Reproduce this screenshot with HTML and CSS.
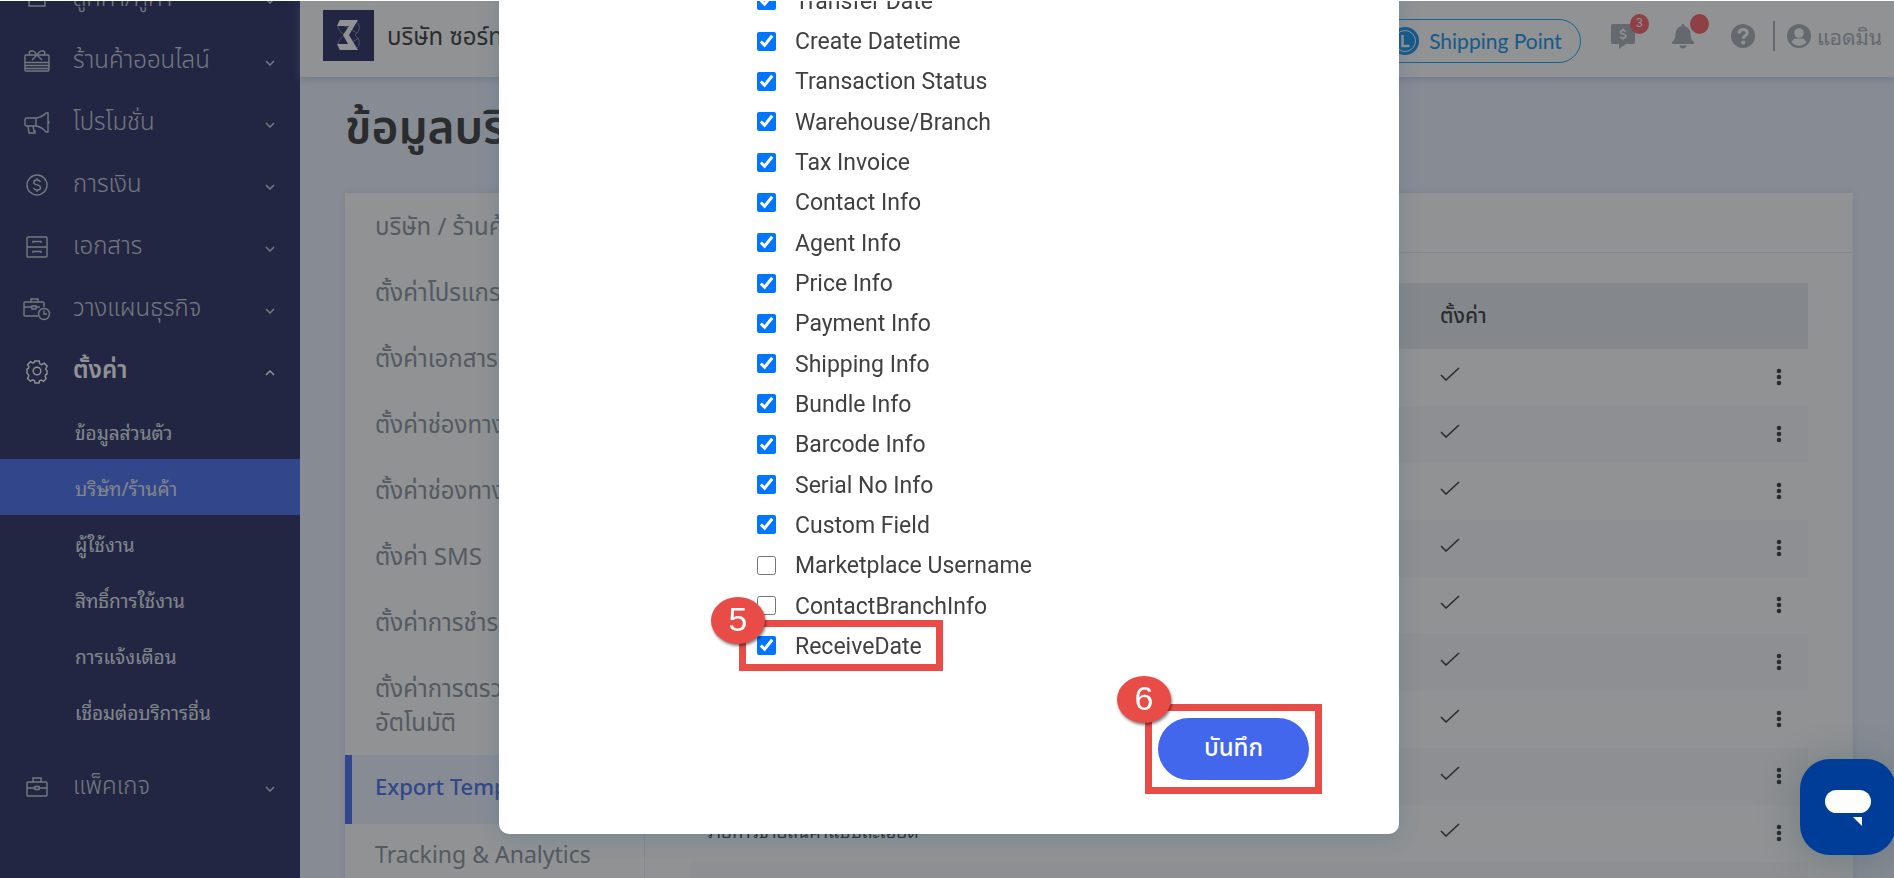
FILE: index.html
```html
<!DOCTYPE html>
<html lang="th">
<head>
    <meta charset="UTF-8">
    <meta name="viewport" content="width=device-width, initial-scale=1.0">
    <title>ข้อมูลบริษัท</title>
    <link rel="stylesheet" href="styles.css">
</head>
<body>
    <div class="layout">
        <nav class="sidebar">
            <a href="#" class="menu-item">
                <svg class="icon" viewBox="0 0 28 28"><circle cx="14" cy="8" r="5"/><path d="M6 21v-3q0-4 4-4h8q4 0 4 4v3zM2 15l3-2M26 15l-3-2"/></svg>
                <span>ลูกค้า/คู่ค้า</span>
                <svg class="arrow" viewBox="0 0 10 6"><path d="M1 1l4 4 4-4"/></svg>
            </a>
            <a href="#" class="menu-item">
                <svg class="icon" viewBox="0 0 28 28"><rect x="2" y="8" width="24" height="16" rx="1"/><path d="M2 15.500h24M2 18.500h24M2 21.500h24M14 8q-3-5-6-4-3 1-1 4M14 8q3-5 6-4 3 1 1 4M14 8l-5 5M14 8l5 5"/></svg>
                <span>ร้านค้าออนไลน์</span>
                <svg class="arrow" viewBox="0 0 10 6"><path d="M1 1l4 4 4-4"/></svg>
            </a>
            <a href="#" class="menu-item">
                <svg class="icon" viewBox="0 0 28 28"><path d="M13 9H4q-2 0-2 2v4q0 2 2 2h9zM13 9q6-1 10-5h2v19h-2q-4-5-10-6M25 12q2 1 0 3M5 17l1 7h6v-2h-1l-1-5"/></svg>
                <span>โปรโมชั่น</span>
                <svg class="arrow" viewBox="0 0 10 6"><path d="M1 1l4 4 4-4"/></svg>
            </a>
            <a href="#" class="menu-item">
                <svg class="icon" viewBox="0 0 28 28"><circle cx="14" cy="14" r="10"/><path d="M17.500 11q-1-2-3.500-2-3.300 0-3.300 2.300 0 2 3.300 2.600 3.500.6 3.500 2.800 0 2.300-3.500 2.300-2.700 0-3.500-2M14 7v2M14 19v2"/></svg>
                <span>การเงิน</span>
                <svg class="arrow" viewBox="0 0 10 6"><path d="M1 1l4 4 4-4"/></svg>
            </a>
            <a href="#" class="menu-item">
                <svg class="icon" viewBox="0 0 28 28"><rect x="4" y="4" width="20" height="20" rx="1"/><path d="M4 14h20M10 10V8.500h8V10M10 20v-1.500h8V20"/></svg>
                <span>เอกสาร</span>
                <svg class="arrow" viewBox="0 0 10 6"><path d="M1 1l4 4 4-4"/></svg>
            </a>
            <a href="#" class="menu-item">
                <svg class="icon" viewBox="0 0 28 28"><path d="M15 21H2q-1 0-1-1V8q0-1 1-1h18q1 0 1 1v4M8 7V4h7v3M1 12h8M13 12h4M9 11v3h4v-3z"/><circle cx="21" cy="19" r="5.500"/><path d="M21 15.500V19h3"/></svg>
                <span>วางแผนธุรกิจ</span>
                <svg class="arrow" viewBox="0 0 10 6"><path d="M1 1l4 4 4-4"/></svg>
            </a>
            <a href="#" class="menu-item open">
                <svg class="icon" viewBox="0 0 28 28"><circle cx="14" cy="14" r="3.800"/><path d="M11.800 4h4.400l.6 2.800 2 .9 2.500-1.500 2.900 3-1.500 2.500.6 1.300.7.500v3.600l-1.300.7-.7 1.600 1.200 2-2.600 3-2.300-1.400-1.800.8-.5 2.200h-4l-.5-2.300-1.900-.9-2.300 1.400-2.800-2.900 1.400-2.300-.7-1.700L4 16.200v-4.100l1.400-.7.6-1.500-1.400-2.300 3-2.900L9.700 6l1.500-.6z"/></svg>
                <span>ตั้งค่า</span>
                <svg class="arrow" viewBox="0 0 10 6"><path d="M1 5l4-4 4 4"/></svg>
            </a>
            <div class="submenu">
                <a href="#">ข้อมูลส่วนตัว</a>
                <a href="#" class="active">บริษัท/ร้านค้า</a>
                <a href="#">ผู้ใช้งาน</a>
                <a href="#">สิทธิ์การใช้งาน</a>
                <a href="#">การแจ้งเตือน</a>
                <a href="#">เชื่อมต่อบริการอื่น</a>
            </div>
            <a href="#" class="menu-item">
                <svg class="icon" viewBox="0 0 28 28"><rect x="4" y="9" width="20" height="14" rx="1"/><path d="M10 9V5h8v4M4 15h8M16 15h8M12 13.500h4v3h-4z"/></svg>
                <span>แพ็คเกจ</span>
                <svg class="arrow" viewBox="0 0 10 6"><path d="M1 1l4 4 4-4"/></svg>
            </a>
        </nav>

        <div class="page">
            <header class="topbar">
                <svg class="logo" viewBox="0 0 51 51"><path d="M0 0h51v51H0z" fill="#23275d"/><path d="M17 10q-6 9 5 15-11 7-5 15M32 10q9 8 0 15 9 8 0 15M20 15l14 8M36 28l-15 9" fill="none" stroke="#777ca8"/><path d="M17 10h18l-9 15 9 15H17l-3-6h11l-5-9 6-9H14z" fill="#fff"/></svg>
                <span class="company">บริษัท ซอร์ทเอาท์ จำกัด</span>
                <div class="tools">
                    <a href="#" class="pill">
                        <svg viewBox="0 0 28 28"><circle cx="14" cy="14" r="14" fill="#0a8ee6"/><circle cx="14" cy="14" r="10.500" fill="none" stroke="#fff"/><path d="M11.500 8v11h7" fill="none" stroke="#fff" stroke-width="2.500"/></svg>
                        Shipping Point
                    </a>
                    <button type="button" class="tool" aria-label="ยอดเงิน">
                        <svg viewBox="0 0 26 26"><path d="M3 1h20q2 0 2 2v16q0 2-2 2h-7l-7 5v-5H3q-2 0-2-2V3q0-2 2-2z"/><path d="M15.500 8.500q-1-1.300-2.500-1.300-2.500 0-2.500 1.800 0 1.500 2.500 2 2.800.6 2.800 2.200 0 1.900-2.800 1.900-1.800 0-2.800-1.500M13 5.500v1.700M13 15v1.800" fill="none" stroke="#fff" stroke-width="1.600"/></svg>
                        <span class="count">3</span>
                    </button>
                    <button type="button" class="tool" aria-label="แจ้งเตือน">
                        <svg viewBox="0 0 26 26"><path d="M13 1q1.700 0 1.700 2.200 5.800 1.300 5.800 8 0 5.300 3.500 7.800v2H2v-2q3.500-2.500 3.500-7.800 0-6.700 5.800-8Q11.300 1 13 1zM9.500 22.500h7q-.5 3-3.500 3t-3.500-3z"/></svg>
                        <span class="count"></span>
                    </button>
                    <button type="button" class="tool" aria-label="ช่วยเหลือ">
                        <svg viewBox="0 0 26 26"><circle cx="13" cy="13" r="12"/><path d="M9 10.500q.5-4 4.200-4 4 0 4 3.400 0 1.800-2.200 3-1.800 1-1.800 2.800" fill="none" stroke="#fff" stroke-width="3"/><circle cx="13.200" cy="19.500" r="2" fill="#fff"/></svg>
                    </button>
                    <a href="#" class="user">
                        <svg viewBox="0 0 26 26"><circle cx="13" cy="13" r="12"/><circle cx="13" cy="10" r="4.800" fill="#fff"/><path d="M5.500 19q2-3.800 5-3.500h5q3-.3 5 3.500-3 3.800-7.500 3.800T5.500 19z" fill="#fff"/></svg>
                        แอดมิน
                    </a>
                </div>
            </header>

            <main>
                <h1>ข้อมูลบริษัท</h1>
                <div class="card">
                    <nav class="tabs">
                        <a href="#">บริษัท / ร้านค้า</a>
                        <a href="#">ตั้งค่าโปรแกรม</a>
                        <a href="#">ตั้งค่าเอกสาร</a>
                        <a href="#">ตั้งค่าช่องทางขาย</a>
                        <a href="#">ตั้งค่าช่องทางส่ง</a>
                        <a href="#">ตั้งค่า SMS</a>
                        <a href="#">ตั้งค่าการชำระเงิน</a>
                        <a href="#">ตั้งค่าการตรวจสอบ<br>อัตโนมัติ</a>
                        <a href="#" lang="en" class="active">Export Template</a>
                        <a href="#" lang="en">Tracking &amp; Analytics</a>
                    </nav>
                    <section class="panel">
                        <h2>Export Template</h2>
                        <table>
                            <thead>
                                <tr><th class="name">ชื่อ</th><th>ตั้งค่า</th><th class="more"></th></tr>
                            </thead>
                            <tbody id="rows"></tbody>
                        </table>
                    </section>
                </div>
            </main>
        </div>
    </div>

    <div class="overlay">
        <form class="modal" id="modal">
            <div class="fields" id="fields"></div>
            <div class="actions">
                <div class="save">
                    <button type="submit">บันทึก</button>
                    <div class="mark"><span class="step">6</span></div>
                </div>
            </div>
        </form>
    </div>

    <button type="button" class="chat" aria-label="แชท">
        <svg viewBox="0 0 48 38"><rect x="1" y="1" width="46" height="23" rx="11.500"/><path d="M29 28h9v9z"/></svg>
    </button>

    <script>
        const names = ['Transfer Date', 'Create Datetime', 'Transaction Status', 'Warehouse/Branch', 'Tax Invoice', 'Contact Info', 'Agent Info', 'Price Info', 'Payment Info', 'Shipping Info', 'Bundle Info', 'Barcode Info', 'Serial No Info', 'Custom Field', 'Marketplace Username', 'ContactBranchInfo', 'ReceiveDate']
        const unchecked = ['Marketplace Username', 'ContactBranchInfo']

        const fields = document.querySelector('#fields')
        names.forEach((name, i) => {
            const row = document.createElement('div')
            row.classList.add('field')
            row.innerHTML = `<input type="checkbox" id="field-${i}"><label for="field-${i}">${name}</label>`
            if (name === 'ReceiveDate') {
                row.innerHTML += '<div class="mark"><span class="step">5</span></div>'
            }
            row.querySelector('input').checked = !unchecked.includes(name)
            fields.append(row)
        })

        const rows = document.querySelector('#rows')
        for (let i = 0; i < 10; i++) {
            const tr = document.createElement('tr')
            tr.innerHTML = `<td class="title">รายการขายสินค้าแบบละเอียด</td>
                <td><svg class="check" viewBox="0 0 20 14"><path d="M1 8l5 5L19 1"/></svg></td>
                <td><button type="button" class="dots" aria-label="เมนู"><svg viewBox="0 0 6 18"><circle cx="3" cy="3" r="2.300"/><circle cx="3" cy="9" r="2.300"/><circle cx="3" cy="15" r="2.300"/></svg></button></td>`
            rows.append(tr)
        }

        document.querySelector('#modal').addEventListener('submit', e => e.preventDefault())
    </script>
</body>
</html>
```
FILE: styles.css
```css
*{
    margin: 0;
    padding: 0;
    box-sizing: border-box;
}
body{
    height: 100vh;
    overflow: hidden;
    font-family: "Noto Sans Thai", "Noto Sans", sans-serif;
    color: #333;
    background-color: #edf1ff;
}
a{
    color: inherit;
    text-decoration: none;
}
button{
    border: none;
    background: none;
    font-family: inherit;
}
.layout{
    display: flex;
    height: 100vh;
}
/* Sidebar */
.sidebar{
    flex: 0 0 300px;
    overflow: hidden;
    background-color: #23275d;
    color: #c6cbd8;
}
.menu-item{
    display: flex;
    align-items: center;
    height: 62px;
    padding: 0 25px 0 23px;
    font-size: 24px;
    font-weight: 300;
}
.menu-item:first-child{
    margin-top: -32px;
}
.menu-item span{
    flex: 1;
    margin-left: 22px;
}
.menu-item.open{
    color: #fff;
    font-weight: 600;
}
.icon{
    width: 28px;
    height: 28px;
    fill: none;
    stroke: currentColor;
    stroke-width: 1.4;
}
.arrow{
    width: 10px;
    height: 6px;
    margin-top: 4px;
    fill: none;
    stroke: currentColor;
    stroke-width: 1.5;
}
.submenu{
    padding: 1px 0 17px;
}
.submenu a{
    display: flex;
    align-items: center;
    height: 56px;
    padding-left: 75px;
    font-family: "Noto Sans Thai Looped", "Roboto", sans-serif;
    font-size: 19px;
    color: #e3e6f0;
}
.submenu a.active{
    background-color: #4266ec;
}
/* Top bar */
.page{
    flex: 1;
    min-width: 0;
}
.topbar{
    position: relative;
    display: flex;
    align-items: center;
    height: 77px;
    padding: 0 12px 6px 23px;
    background-color: #fff;
    box-shadow: 0 2px 8px rgba(120, 150, 190, 0.4);
}
.logo{
    width: 51px;
    height: 51px;
}
.company{
    flex: 1;
    margin-left: 13px;
    padding-top: 4px;
    font-size: 24px;
    white-space: nowrap;
}
.tools{
    display: flex;
    align-items: center;
    color: #a5adb5;
}
.pill{
    display: flex;
    align-items: center;
    gap: 10px;
    height: 44px;
    margin: 10px 29px 0 0;
    padding: 0 18px;
    border: 1px solid #0a9ff5;
    border-radius: 22px;
    font-family: Lato, sans-serif;
    font-size: 21px;
    color: #0a8ee6;
}
.pill svg{
    width: 28px;
    height: 28px;
}
.tool{
    position: relative;
    width: 26px;
    height: 26px;
    margin-right: 34px;
    color: inherit;
}
.tool svg,
.user svg{
    display: block;
    width: 26px;
    height: 26px;
    fill: currentColor;
}
.count{
    position: absolute;
    top: -9px;
    left: 20px;
    width: 19px;
    height: 20px;
    border-radius: 50%;
    background-color: #fa5a5f;
    font-family: "Liberation Sans", sans-serif;
    font-size: 12px;
    line-height: 19px;
    color: #fff;
}
.user{
    display: flex;
    align-items: center;
    gap: 5px;
    height: 30px;
    margin-left: -17px;
    padding-left: 11px;
    border-left: 2px solid #a5adb5;
    font-family: "Noto Sans Thai Looped", "Roboto", sans-serif;
    font-size: 21px;
}
/* Content */
main{
    padding: 13px 41px 0 45px;
}
h1{
    font-size: 46px;
    line-height: 78px;
    font-weight: 600;
}
.card{
    display: flex;
    margin-top: 25px;
    background-color: #fff;
    box-shadow: 0 0 8px rgba(120, 150, 190, 0.25);
}
.tabs{
    flex: 0 0 300px;
    border-right: 1px solid #e9ecf2;
    font-size: 24px;
    line-height: 34px;
    color: #868e96;
}
.tabs a{
    display: block;
    padding: 18px 24px 14px 30px;
    white-space: nowrap;
    overflow: hidden;
}
.tabs a:lang(en){
    padding-top: 15px;
    font-size: 23px;
}
.tabs a.active{
    padding: 17px 24px 18px 23px;
    border-left: 7px solid #4266ec;
    background-color: #edf1ff;
    font-weight: 500;
    font-size: 22px;
    color: #4266ec;
}
.panel{
    flex: 1;
}
.panel h2{
    height: 60px;
    padding: 0 45px;
    border-bottom: 1px solid #e6eaee;
    font-size: 23px;
    line-height: 60px;
}
table{
    width: calc(100% - 90px);
    margin: 30px 45px 0;
    border-collapse: collapse;
    table-layout: fixed;
    font-size: 21px;
}
th{
    height: 66px;
    padding-left: 15px;
    background-color: #e7ebee;
    font-weight: 500;
    text-align: left;
}
.name{
    width: 735px;
}
.more{
    width: 60px;
}
td{
    height: 57px;
    padding: 5px 0 0 15px;
    vertical-align: top;
}
.title{
    padding-top: 11px;
    font-family: "Noto Sans Thai Looped", "Roboto", sans-serif;
    font-size: 18px;
}
tbody tr:nth-child(even){
    background-color: #f9f9fa;
}
.check{
    display: block;
    width: 20px;
    height: 14px;
    margin-top: 13px;
    fill: none;
    stroke: #333;
    stroke-width: 1.6;
}
.dots svg{
    display: block;
    width: 6px;
    height: 18px;
    margin-top: 14px;
    margin-left: 13px;
    fill: #333;
}
/* Modal */
.overlay{
    position: fixed;
    inset: 0;
    display: flex;
    justify-content: center;
    align-items: flex-end;
    padding: 0 0 44px 4px;
    overflow: hidden;
    border-top: 1px solid #fff;
    background-color: rgba(33, 37, 41, 0.5);
}
.modal{
    width: 900px;
    padding: 40px 90px 54px;
    border-radius: 10px;
    background-color: #fff;
    box-shadow: 0 4px 20px rgba(60, 110, 140, 0.3);
}
.fields{
    padding-left: 168px;
    font-family: Roboto, sans-serif;
    font-size: 24px;
    line-height: 1.68;
    color: #404042;
}
.field{
    position: relative;
    display: flex;
    align-items: center;
    gap: 19px;
    width: fit-content;
}
.field label{
    padding-top: 2px;
    font-size: 23px;
    line-height: 38px;
}
.field::after{
    content: "";
    height: 1.68em;
    margin-left: -19px;
}
.field input{
    width: 19px;
    height: 19px;
    accent-color: #0075ff;
}
.actions{
    display: flex;
    justify-content: flex-end;
    margin-top: 52px;
}
.save{
    position: relative;
}
.save button{
    width: 151px;
    height: 62px;
    border-radius: 31px;
    background-color: #4266ec;
    font-size: 24px;
    font-weight: 500;
    color: #fff;
}
/* Numbered callouts */
.mark{
    position: absolute;
    inset: -14px -13px;
    border: 7px solid #e94b47;
    pointer-events: none;
}
.field .mark{
    inset: -6px -21px -5px -18px;
}
.step{
    position: absolute;
    top: -35px;
    left: -35px;
    width: 54px;
    height: 47px;
    border-radius: 50%;
    background-color: #e94b47;
    box-shadow: 1px 2px 3px rgba(0, 0, 0, 0.5);
    font-family: "Liberation Sans", sans-serif;
    font-size: 34px;
    line-height: 44px;
    text-align: center;
    color: #fff;
}
.field .step{
    top: -30px;
}
/* Chat launcher */
.chat{
    position: fixed;
    right: -2px;
    bottom: 23px;
    width: 96px;
    height: 96px;
    border-radius: 30px;
    background-color: #003d99;
    box-shadow: 0 4px 40px rgba(0, 60, 60, 0.25);
}
.chat svg{
    width: 48px;
    height: 38px;
    margin-top: 8px;
    fill: #fff;
}
```
